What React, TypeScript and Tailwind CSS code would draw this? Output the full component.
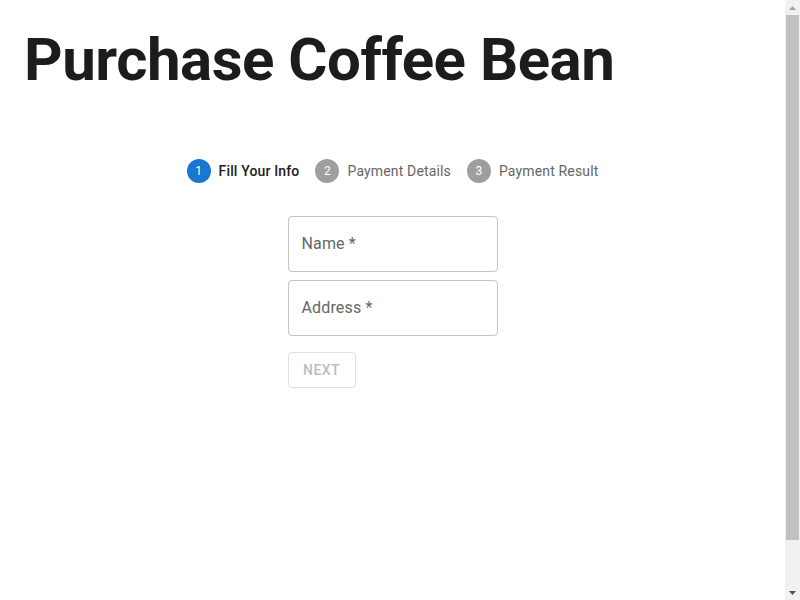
export default function App() {
  const steps = ['Fill Your Info', 'Payment Details', 'Payment Result'];
  const active = 0;

  return (
    <div className="flex h-[600px] bg-white font-['Roboto',sans-serif]">
      <div className="flex-1">
        <h1 className="px-6 pt-6 text-[60px] font-bold leading-[72px] tracking-[-0.5px] text-[#1c1c1c]">
          Purchase Coffee Bean
        </h1>

        {/* stepper */}
        <div className="mt-[63px] flex items-center justify-center">
          {steps.map((label, idx) => (
            <div key={label} className="flex items-center px-2">
              <span
                className={`mr-2 flex h-6 w-6 items-center justify-center rounded-full text-xs text-white ${
                  idx === active ? 'bg-[#1976d2]' : 'bg-[#9e9e9e]'
                }`}
              >
                {idx + 1}
              </span>
              <span
                className={`text-sm tracking-[0.15px] ${
                  idx === active ? 'font-medium text-[#212121]' : 'text-[#666666]'
                }`}
              >
                {label}
              </span>
            </div>
          ))}
        </div>

        {/* form */}
        <div className="mx-auto mt-[33px] flex w-[210px] flex-col">
          <div className="flex h-14 items-center rounded border border-[#c4c4c4] px-[13px] text-base tracking-[0.15px] text-[#666666]">
            Name *
          </div>
          <div className="mt-2 flex h-14 items-center rounded border border-[#c4c4c4] px-[13px] text-base tracking-[0.15px] text-[#666666]">
            Address *
          </div>
          <div>
            <button
              disabled
              className="mt-4 h-9 w-[68px] rounded border border-[#e0e0e0] text-sm font-medium uppercase tracking-[0.4px] text-[#bdbdbd]"
            >
              Next
            </button>
          </div>
        </div>
      </div>

      {/* scrollbar */}
      <div className="flex w-[15px] flex-col items-center bg-[#f1f1f1]">
        <div className="flex h-[15px] items-center justify-center">
          <svg width="7" height="4" viewBox="0 0 7 4">
            <path d="M0 4 L3.5 0 L7 4 Z" fill="#a3a3a3" />
          </svg>
        </div>
        <div className="h-[525px] w-[13px] bg-[#c1c1c1]" />
        <div className="flex-1" />
        <div className="flex h-[15px] items-center justify-center">
          <svg width="7" height="4" viewBox="0 0 7 4">
            <path d="M0 0 L7 0 L3.5 4 Z" fill="#505050" />
          </svg>
        </div>
      </div>
    </div>
  );
}
